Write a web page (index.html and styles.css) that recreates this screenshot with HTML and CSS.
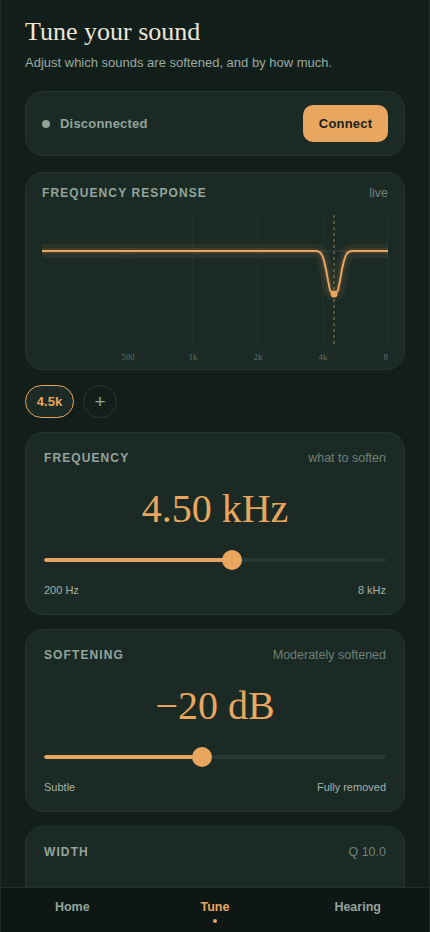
FILE: index.html
```html
<!DOCTYPE html>
<html lang="en">
<head>
<meta charset="utf-8">
<meta name="viewport" content="width=430">
<title>Tune your sound</title>
<link rel="stylesheet" href="styles.css">
</head>
<body>
<div class="app">
  <main class="main">
    <header class="intro">
      <h1 class="title">Tune your sound</h1>
      <p class="subtitle">Adjust which sounds are softened, and by how much.</p>
    </header>

    <section class="card conn">
      <div class="conn-status"><span class="conn-dot"></span><span class="conn-label">Disconnected</span></div>
      <button class="btn-connect">Connect</button>
    </section>

    <section class="card graph">
      <div class="card-head"><span class="card-label">FREQUENCY RESPONSE</span><span class="card-note">live</span></div>
      <svg class="chart" width="346" height="150" viewBox="0 0 346 150">
        <g stroke="#25332e" stroke-width="1">
          <line x1="86" y1="4" x2="86" y2="134"/>
          <line x1="151" y1="4" x2="151" y2="134"/>
          <line x1="216" y1="4" x2="216" y2="134"/>
          <line x1="281" y1="4" x2="281" y2="134"/>
          <line x1="345.5" y1="4" x2="345.5" y2="134"/>
        </g>
        <line x1="0" y1="40" x2="346" y2="40" stroke="#34433b" stroke-width="1"/>
        <line x1="292" y1="4" x2="292" y2="134" stroke="#6b6348" stroke-width="1.5" stroke-dasharray="3 3"/>
        <polyline fill="none" stroke="#e8a65e" stroke-opacity="0.07" stroke-width="14" stroke-linejoin="round" stroke-linecap="round" points="0,40 272,40 274,40.1 276,40.4 278,41.4 280,44 282,49.5 284,58.3 286,69.4 288,79.1 290,82 292,83 294,82 296,79.1 298,69.4 300,58.3 302,49.5 304,44 306,41.4 308,40.4 310,40.1 312,40 346,40"/>
        <polyline fill="none" stroke="#e8a65e" stroke-opacity="0.1" stroke-width="6" stroke-linejoin="round" stroke-linecap="round" points="0,40 272,40 274,40.1 276,40.4 278,41.4 280,44 282,49.5 284,58.3 286,69.4 288,79.1 290,82 292,83 294,82 296,79.1 298,69.4 300,58.3 302,49.5 304,44 306,41.4 308,40.4 310,40.1 312,40 346,40"/>
        <polyline fill="none" stroke="#e8a65e" stroke-width="2" stroke-linejoin="round" points="0,40 272,40 274,40.1 276,40.4 278,41.4 280,44 282,49.5 284,58.3 286,69.4 288,79.1 290,82 292,83 294,82 296,79.1 298,69.4 300,58.3 302,49.5 304,44 306,41.4 308,40.4 310,40.1 312,40 346,40"/>
        <circle cx="292" cy="83" r="3.5" fill="#e8a65e"/>
        <g class="axis" fill="#5d6d65" font-size="9" text-anchor="middle">
          <text x="86" y="149">500</text>
          <text x="151" y="149">1k</text>
          <text x="216" y="149">2k</text>
          <text x="281" y="149">4k</text>
          <text x="346" y="149" text-anchor="end">8</text>
        </g>
      </svg>
    </section>

    <div class="chips">
      <button class="chip chip-active">4.5k</button>
      <button class="chip chip-add">+</button>
    </div>

    <section class="card control">
      <div class="card-head"><span class="card-label">FREQUENCY</span><span class="card-note">what to soften</span></div>
      <div class="big-value">4.50 kHz</div>
      <div class="slider">
        <div class="track"><div class="fill" style="width:55%"></div></div>
        <div class="thumb" style="left:55%"></div>
      </div>
      <div class="range"><span>200 Hz</span><span>8 kHz</span></div>
    </section>

    <section class="card control">
      <div class="card-head"><span class="card-label">SOFTENING</span><span class="card-note">Moderately softened</span></div>
      <div class="big-value">−20 dB</div>
      <div class="slider">
        <div class="track"><div class="fill" style="width:46.2%"></div></div>
        <div class="thumb" style="left:46.2%"></div>
      </div>
      <div class="range"><span>Subtle</span><span>Fully removed</span></div>
    </section>

    <section class="card control control-tail">
      <div class="card-head"><span class="card-label">WIDTH</span><span class="card-note">Q 10.0</span></div>
    </section>
  </main>

  <nav class="tabbar">
    <a class="tab">Home</a>
    <a class="tab tab-active">Tune</a>
    <a class="tab">Hearing</a>
  </nav>
</div>
</body>
</html>
```

FILE: styles.css
```css
* { box-sizing: border-box; }
html, body { margin: 0; padding: 0; }
body {
  background: #121e1a;
  font-family: "Liberation Sans", Arial, sans-serif;
  color: #e9e4d8;
}
.app {
  width: 430px;
  height: 932px;
  border-left: 1px solid #1f2c27;
  border-right: 1px solid #1f2c27;
  display: flex;
  flex-direction: column;
  overflow: hidden;
}
.main {
  flex: 1;
  min-height: 0;
  overflow: hidden;
  padding: 16px 24px 0;
  display: flex;
  flex-direction: column;
}
.title {
  margin: 0;
  font-family: "Liberation Serif", "Times New Roman", serif;
  font-weight: 400;
  font-size: 26px;
  line-height: 32px;
  color: #ece6d8;
}
.subtitle {
  margin: 6px 0 0;
  font-size: 13px;
  line-height: 18px;
  color: #9aaba2;
}
.card {
  background: #1c2a25;
  border: 1px solid #26352f;
  border-radius: 18px;
  flex-shrink: 0;
}
.conn {
  margin-top: 19px;
  height: 65px;
  padding: 0 16px;
  display: flex;
  align-items: center;
  justify-content: space-between;
}
.conn-status { display: flex; align-items: center; gap: 10px; }
.conn-dot {
  width: 8px; height: 8px; border-radius: 50%;
  background: #8fa396;
}
.conn-label {
  font-weight: 700;
  font-size: 13px;
  color: #93a59b;
  letter-spacing: 0.2px;
}
.btn-connect {
  width: 85px; height: 37px;
  border: 0;
  border-radius: 10px;
  background: #e8a65e;
  color: #1a221e;
  font-family: "Liberation Sans", Arial, sans-serif;
  font-weight: 700;
  font-size: 13px;
  letter-spacing: 0.2px;
}
.graph {
  margin-top: 16px;
  padding: 12px 16px 8px;
}
.card-head {
  display: flex;
  justify-content: space-between;
  align-items: center;
  height: 16px;
}
.card-label {
  font-weight: 700;
  font-size: 12px;
  letter-spacing: 1.1px;
  color: #93a59b;
}
.card-note {
  font-size: 12.5px;
  color: #6f8078;
}
.chart {
  display: block;
  margin-top: 10px;
}
.axis { font-family: "Liberation Serif", "Times New Roman", serif; }
.chips {
  display: flex;
  gap: 9px;
  margin-top: 15px;
  flex-shrink: 0;
}
.chip {
  height: 33px;
  border-radius: 17px;
  font-family: "Liberation Sans", Arial, sans-serif;
  padding: 0;
}
.chip-active {
  width: 49px;
  background: #1c2a25;
  border: 1px solid #e8a65e;
  color: #e8a65e;
  font-weight: 700;
  font-size: 13px;
}
.chip-add {
  width: 34px;
  background: transparent;
  border: 1px solid #28372f;
  color: #93a59b;
  font-size: 19px;
  font-weight: 300;
  line-height: 1;
}
.control {
  margin-top: 14px;
  padding: 17px 18px 17px;
}
.control-tail { height: 140px; }
.big-value {
  margin-top: 19px;
  text-align: center;
  font-family: "Liberation Serif", "Times New Roman", serif;
  font-size: 40px;
  line-height: 48px;
  color: #e8a65e;
}
.slider {
  position: relative;
  height: 20px;
  margin-top: 17px;
  display: flex;
  align-items: center;
}
.track {
  width: 100%;
  height: 4px;
  border-radius: 2px;
  background: #293832;
  overflow: hidden;
}
.fill {
  height: 100%;
  background: #e8a65e;
  border-radius: 2px;
}
.thumb {
  position: absolute;
  top: 0;
  width: 20px; height: 20px;
  margin-left: -10px;
  border-radius: 50%;
  background: #e8a65e;
}
.range {
  display: flex;
  justify-content: space-between;
  margin-top: 13px;
  font-size: 11px;
  line-height: 14px;
  color: #a3b2a9;
}
.tabbar {
  flex-shrink: 0;
  height: 45px;
  background: #0e1714;
  border-top: 1px solid #24302c;
  display: grid;
  grid-template-columns: 1fr 1fr 1fr;
}
.tab {
  position: relative;
  text-align: center;
  padding-top: 12px;
  font-weight: 700;
  font-size: 12.5px;
  line-height: 14px;
  color: #93a59b;
}
.tab-active { color: #e8a65e; }
.tab-active::after {
  content: "";
  position: absolute;
  left: 50%;
  top: 31px;
  width: 4px; height: 4px;
  margin-left: -2px;
  border-radius: 50%;
  background: #e8a65e;
}
```
